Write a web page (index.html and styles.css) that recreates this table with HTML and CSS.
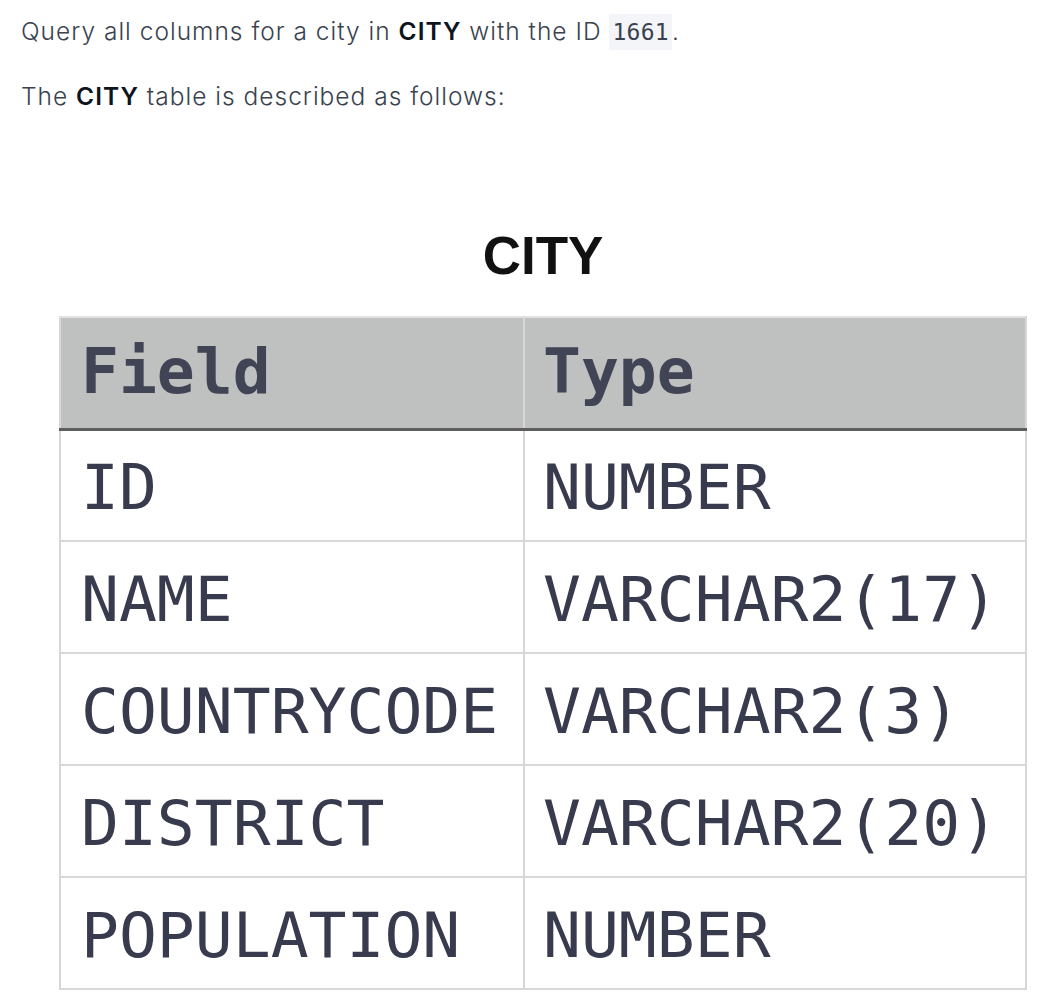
FILE: index.html
```html
<!DOCTYPE html>
<html>
<head>
<meta charset="utf-8">
<link rel="stylesheet" href="styles.css">
</head>
<body>
<div class="content">
  <p class="intro">Query all columns for a city in <strong>CITY</strong> with the ID <code>1661</code>.</p>
  <p class="intro second">The <strong>CITY</strong> table is described as follows:</p>
  <figure class="schema">
    <div class="schema-title">CITY</div>
    <table class="schema-table">
      <thead>
        <tr><th class="col-field">Field</th><th class="col-type">Type</th></tr>
      </thead>
      <tbody>
        <tr><td>ID</td><td>NUMBER</td></tr>
        <tr><td>NAME</td><td>VARCHAR2(17)</td></tr>
        <tr><td>COUNTRYCODE</td><td>VARCHAR2(3)</td></tr>
        <tr><td>DISTRICT</td><td>VARCHAR2(20)</td></tr>
        <tr><td>POPULATION</td><td>NUMBER</td></tr>
      </tbody>
    </table>
  </figure>
</div>
</body>
</html>
```
FILE: styles.css
```css
html, body {
  margin: 0;
  padding: 0;
  background: #ffffff;
}

.content {
  padding: 15px 0 0 21px;
  font-family: Inter, "Liberation Sans", sans-serif;
  color: #39424e;
}

.intro {
  margin: 0;
  font-size: 24.5px;
  line-height: 32px;
  font-weight: 300;
  letter-spacing: 1px;
}

.intro.second {
  margin-top: 32px;
}

.intro strong {
  font-weight: 600;
  color: #0e141e;
}

.intro code {
  font-family: "DejaVu Sans Mono", monospace;
  font-size: 23px;
  letter-spacing: 0.3px;
  background: #f4f5f9;
  padding: 5px 3px;
  color: #39424e;
}

.schema {
  margin: 117px 0 0 38px;
  width: 968px;
}

.schema-title {
  font-family: "Liberation Sans", Arial, sans-serif;
  font-weight: 700;
  font-size: 53px;
  line-height: 53px;
  color: #111111;
  text-align: center;
  margin-bottom: 34px;
}

.schema-table {
  width: 968px;
  border-collapse: collapse;
  table-layout: fixed;
  font-family: "DejaVu Sans Mono", monospace;
  font-size: 63px;
  color: #383b4d;
}

.schema-table th,
.schema-table td {
  box-sizing: border-box;
  text-align: left;
  padding: 0 0 0 20px;
  border: 2px solid #d7d7d7;
  height: 112px;
  vertical-align: middle;
  white-space: nowrap;
  line-height: 1;
}

.schema-table .col-field {
  width: 464px;
}

.schema-table th {
  height: 112px;
  background: #bfc0c0;
  font-weight: 700;
  color: #414455;
  border-bottom: 3px solid #5e5e5e;
  border-top-color: #e2e2e2;
  padding-bottom: 2px;
}

.schema-table th.col-type {
  padding-left: 18px;
}

.schema-table td {
  padding-top: 4px;
}

.schema-table td + td {
  padding-left: 18px;
}
```
